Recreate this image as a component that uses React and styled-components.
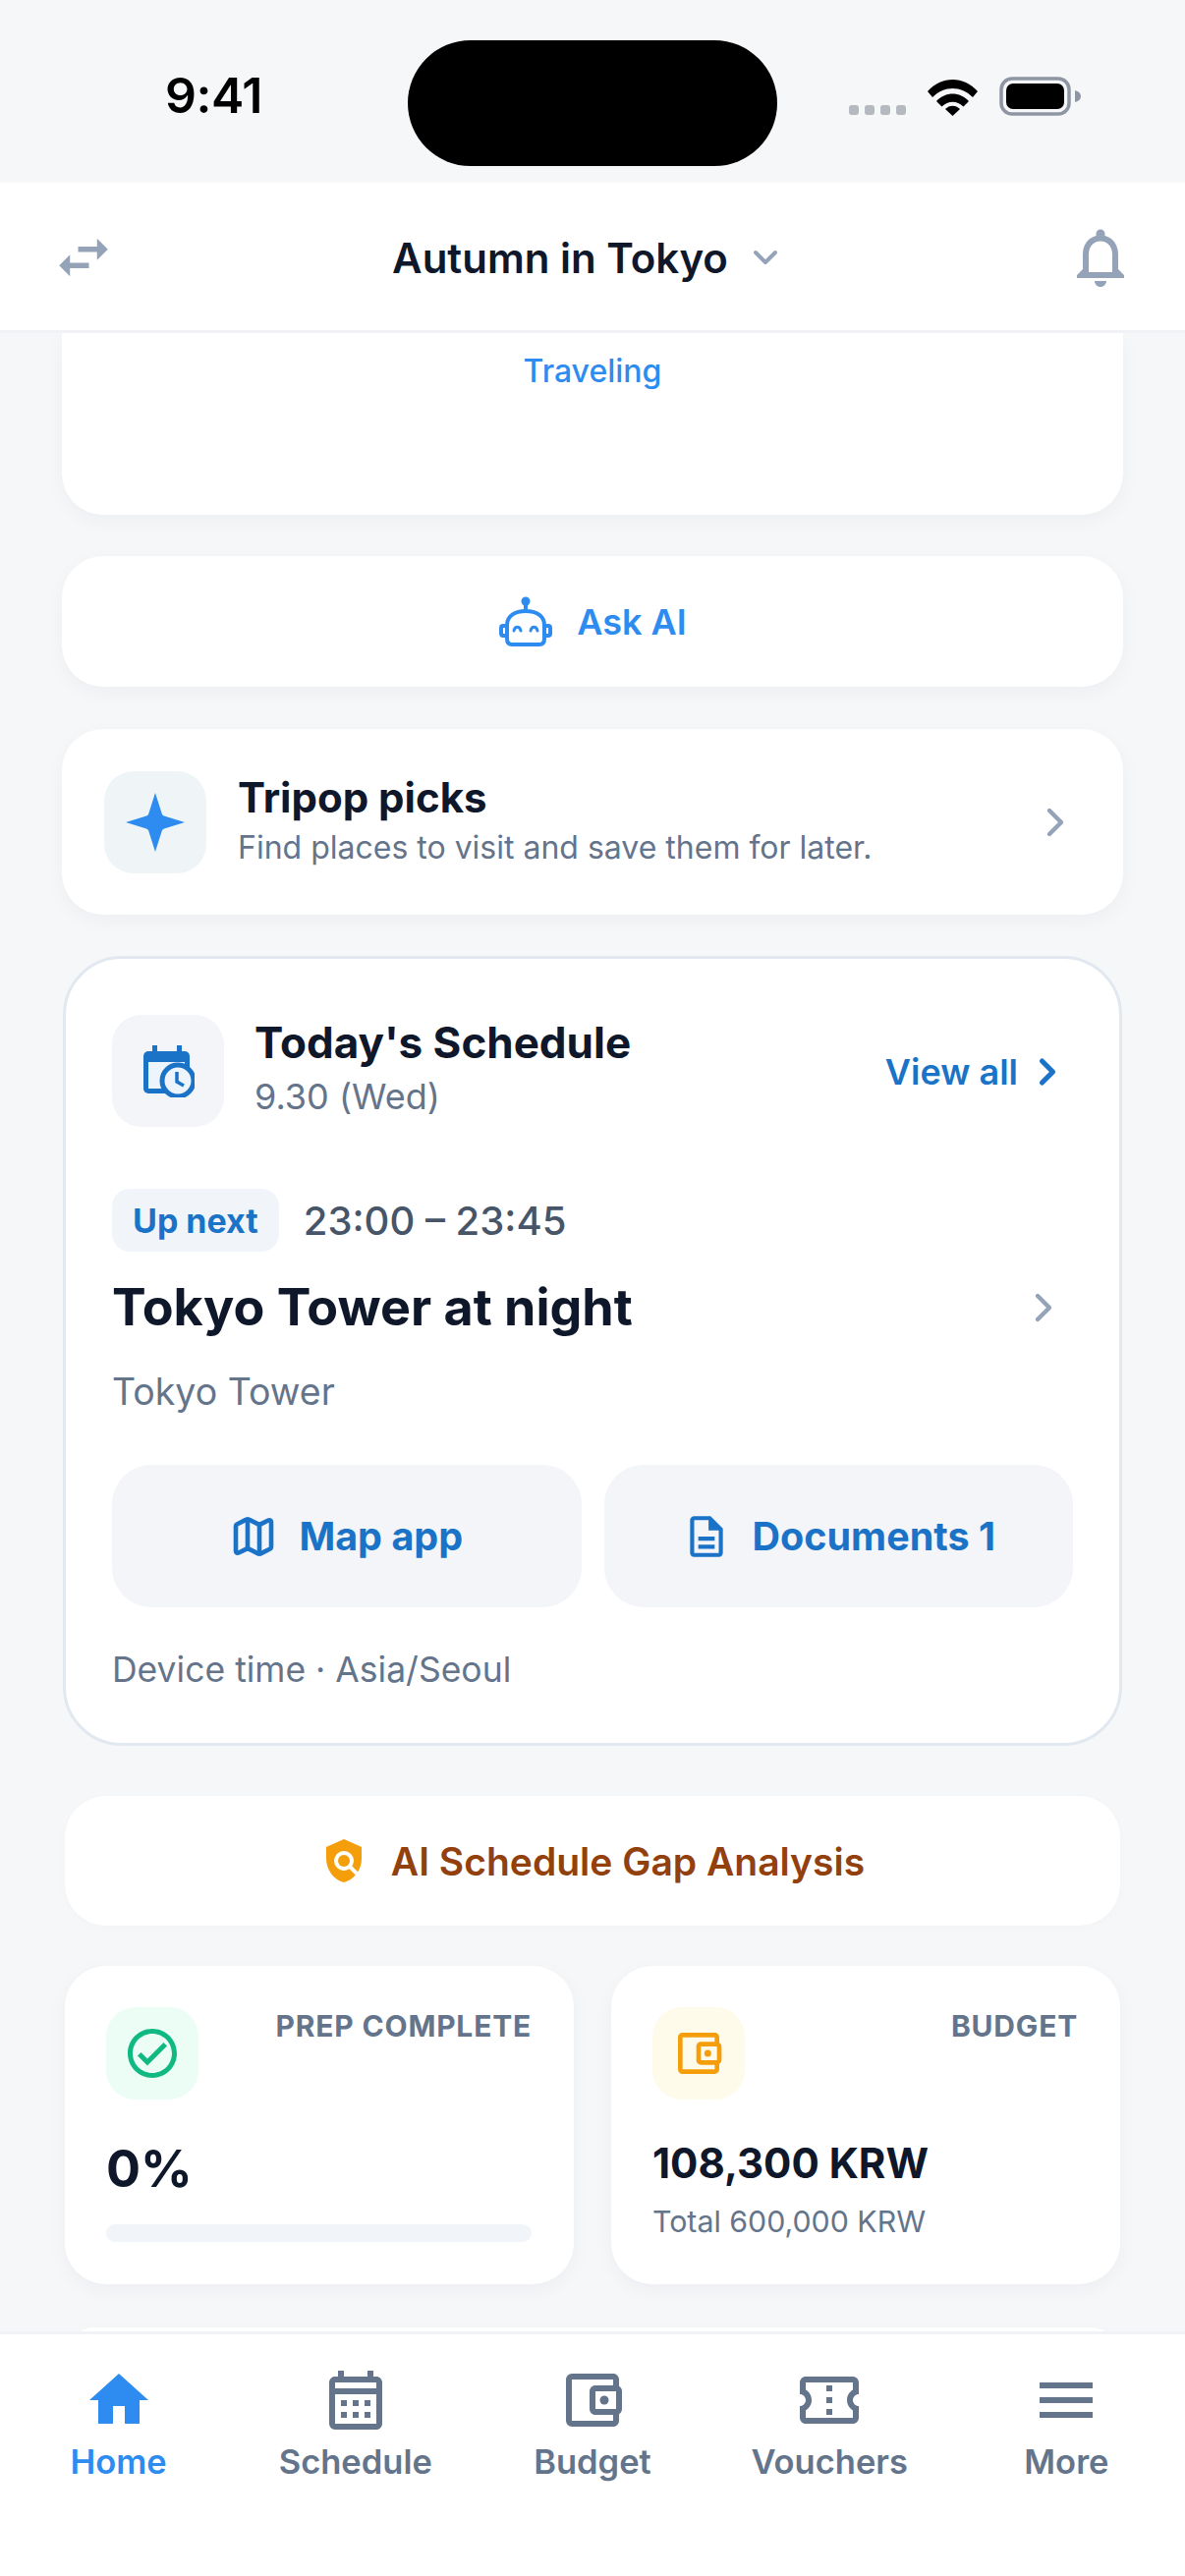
import React from 'react'
import styled, { createGlobalStyle } from 'styled-components'
import { ChevronDown, ChevronRight, Map as MapIcon } from 'lucide-react'
import {
  MdSwapHoriz,
  MdOutlineNotifications,
  MdOutlineDescription,
  MdPolicy,
  MdOutlineCheckCircle,
  MdOutlineAccountBalanceWallet,
  MdHome,
  MdOutlineCalendarMonth,
  MdOutlineConfirmationNumber,
  MdMenu,
} from 'react-icons/md'

const blue = '#2e8cf0'
const deepBlue = '#1a73c7'
const ink = '#0f172a'
const slate = '#64748b'
const muted = '#94a3b8'

const GlobalStyle = createGlobalStyle`
  * { box-sizing: border-box; }
  html, body { margin: 0; padding: 0; background: #f6f7f9; }
  body { font-family: Inter, "Noto Sans", sans-serif; }
`

const Phone = styled.div`
  width: 1206px;
  height: 2622px;
  display: flex;
  flex-direction: column;
  overflow: hidden;
  background: #f6f7f9;
`

const StatusBar = styled.div`
  height: 186px;
  flex: none;
  position: relative;
  display: flex;
  align-items: flex-start;
  padding: 68px 106px 0 168px;
  justify-content: space-between;
`

const Clock = styled.div`
  font-size: 50px;
  line-height: 58px;
  font-weight: 600;
  letter-spacing: -0.5px;
  color: #000;
`

const Island = styled.div`
  position: absolute;
  left: 415px;
  top: 41px;
  width: 376px;
  height: 128px;
  border-radius: 64px;
  background: #000;
`

const StatusIcons = styled.div`
  display: flex;
  align-items: flex-end;
  padding-top: 10px;
  gap: 22px;
`

const Dots = styled.div`
  display: flex;
  gap: 6px;
  padding-bottom: 1px;
`

const Dot = styled.span`
  width: 10px;
  height: 10px;
  border-radius: 3px;
  background: #b5b9c0;
`

const Header = styled.header`
  height: 153px;
  flex: none;
  background: #fff;
  border-bottom: 3px solid #f0f2f5;
  display: flex;
  align-items: center;
  justify-content: space-between;
  padding: 2px 50px 0 52px;
  color: ${muted};
`

const TripTitle = styled.div`
  display: flex;
  align-items: center;
  gap: 18px;
  font-size: 42px;
  font-weight: 600;
  color: ${ink};
  margin-right: 4px;

  svg { color: ${muted}; }
`

const Scroll = styled.main`
  flex: 1;
  min-height: 0;
  overflow: hidden;
  display: flex;
  flex-direction: column;
  gap: 42px;
  padding: 0 63px;
`

const Card = styled.section`
  flex: none;
  background: #fff;
  border-radius: 42px;
  box-shadow: 0 6px 20px rgba(15, 23, 42, 0.04);
`

const HeroStub = styled(Card)`
  height: 185px;
  border-radius: 0 0 42px 42px;
  padding-top: 17px;
  text-align: center;
  font-size: 32px;
  line-height: 44px;
  font-weight: 500;
  color: ${blue};
`

const AskButton = styled(Card)`
  height: 133px;
  display: flex;
  align-items: center;
  justify-content: center;
  gap: 24px;
  font-size: 36px;
  font-weight: 600;
  color: ${blue};
`

const PicksCard = styled(Card)`
  height: 189px;
  margin-top: 1px;
  display: flex;
  align-items: center;
  padding: 0 45px 0 43px;
  gap: 32px;
  color: ${muted};
`

const Tile = styled.div`
  flex: none;
  width: ${p => p.$size}px;
  height: ${p => p.$size}px;
  border-radius: 30px;
  display: flex;
  align-items: center;
  justify-content: center;
  background: ${p => p.$bg};
`

const PicksText = styled.div`
  flex: 1;
`

const PicksTitle = styled.div`
  font-size: 42px;
  line-height: 50px;
  font-weight: 700;
  color: ${ink};
  margin-top: -4px;
`

const PicksSub = styled.div`
  font-size: 32px;
  line-height: 40px;
  margin-top: 6px;
  color: ${slate};
`

const ScheduleCard = styled.section`
  flex: none;
  height: 804px;
  margin: 0 1px;
  background: #fff;
  border: 3px solid #e2e8f0;
  border-radius: 60px;
  padding: 57px 47px 0;
`

const ScheduleHead = styled.div`
  display: flex;
  align-items: center;
  gap: 31px;
  height: 114px;
`

const HeadText = styled.div`
  flex: 1;
`

const HeadTitle = styled.div`
  font-size: 44px;
  line-height: 56px;
  font-weight: 700;
  color: ${ink};
  margin-top: -8px;
`

const HeadDate = styled.div`
  font-size: 36px;
  line-height: 46px;
  margin-top: 4px;
  color: ${slate};
`

const ViewAll = styled.div`
  display: flex;
  align-items: center;
  gap: 8px;
  font-size: 36px;
  font-weight: 600;
  color: ${deepBlue};
  margin: 2px 4px 0 0;
`

const NextRow = styled.div`
  display: flex;
  align-items: center;
  gap: 25px;
  margin-top: 63px;
`

const Pill = styled.div`
  height: 64px;
  padding: 0 21px;
  display: flex;
  align-items: center;
  border-radius: 18px;
  background: #f1f5f9;
  font-size: 34px;
  font-weight: 700;
  color: ${deepBlue};
`

const TimeRange = styled.div`
  font-size: 40px;
  font-weight: 500;
  color: #475569;
`

const EventRow = styled.div`
  display: flex;
  align-items: center;
  justify-content: space-between;
  margin-top: 23px;
  padding-right: 6px;
  color: ${muted};
`

const EventTitle = styled.div`
  font-size: 52px;
  line-height: 68px;
  font-weight: 700;
  color: ${ink};
`

const Place = styled.div`
  margin-top: 30px;
  font-size: 37.5px;
  line-height: 44px;
  color: ${slate};
`

const ActionRow = styled.div`
  display: grid;
  grid-template-columns: 1fr 1fr;
  gap: 23px;
  margin-top: 52px;
`

const ActionButton = styled.div`
  height: 145px;
  border-radius: 40px;
  background: #f3f5f8;
  display: flex;
  align-items: center;
  justify-content: center;
  gap: 22px;
  font-size: 39.5px;
  font-weight: 700;
  color: ${deepBlue};
`

const Note = styled.div`
  margin-top: 42px;
  font-size: 35.5px;
  line-height: 44px;
  color: ${slate};
`

const GapCard = styled(Card)`
  height: 132px;
  margin: 9px 3px 0;
  display: flex;
  align-items: center;
  justify-content: center;
  gap: 24px;
  font-size: 39px;
  font-weight: 600;
  color: #92400e;
  box-shadow: 0 2px 10px rgba(15, 23, 42, 0.02);

  svg { color: #f59e0b; }
`

const StatGrid = styled.div`
  flex: none;
  display: grid;
  grid-template-columns: 518px 518px;
  justify-content: space-between;
  margin: -1px 3px 0;
`

const StatCard = styled(Card)`
  height: 324px;
  padding: 42px 43px 0 42px;
`

const StatTop = styled.div`
  display: flex;
  justify-content: space-between;
  align-items: flex-start;
`

const StatLabel = styled.div`
  font-size: 30px;
  line-height: 38px;
  font-weight: 700;
  letter-spacing: 0.8px;
  color: ${slate};
`

const Percent = styled.div`
  margin-top: 40px;
  font-size: 52px;
  line-height: 62px;
  font-weight: 700;
  color: ${ink};
`

const Track = styled.div`
  margin-top: 25px;
  height: 18px;
  border-radius: 9px;
  background: #f1f5f9;
`

const Amount = styled.div`
  margin-top: 38px;
  font-size: 42px;
  line-height: 54px;
  font-weight: 700;
  color: ${ink};
`

const AmountNote = styled.div`
  margin-top: 12px;
  font-size: 30.3px;
  line-height: 40px;
  color: ${slate};
`

const PeekCard = styled(Card)`
  height: 60px;
  margin: 2px 3px 0;
`

const TabBar = styled.nav`
  height: 249px;
  flex: none;
  background: #fff;
  border-top: 3px solid #f0f2f5;
  display: grid;
  grid-template-columns: repeat(5, 1fr);
  padding-top: 31px;
`

const Tab = styled.div`
  display: flex;
  flex-direction: column;
  align-items: center;
  gap: 5px;
  font-size: 34.5px;
  line-height: 44px;
  font-weight: 600;
  color: ${p => (p.$active ? blue : slate)};
`

function WifiGlyph() {
  return (
    <svg width="51" height="38" viewBox="0 0 51 38">
      <path d="M0 13 C14 -3 37 -3 51 13 L46 19 C34 7 17 7 5 19Z" fill="#000" />
      <path d="M9 23 C18 13 33 13 42 23 L36.5 28.5 C30 22 21 22 14.5 28.5Z" fill="#000" />
      <path d="M18 31 C22 26.5 29 26.5 33 31 L25.5 38Z" fill="#000" />
    </svg>
  )
}

function BatteryGlyph() {
  return (
    <svg width="83" height="40" viewBox="0 0 83 40">
      <rect x="2" y="2" width="69" height="36" rx="11" fill="none" stroke="#8e96a4" strokeWidth="3.5" />
      <rect x="7" y="7" width="59" height="26" rx="7" fill="#000" />
      <path d="M77 14 C81 15 83 17 83 20 C83 23 81 25 77 26Z" fill="#8e96a4" />
    </svg>
  )
}

function RobotGlyph() {
  return (
    <svg width="56" height="52" viewBox="0 0 56 52" fill="none" stroke={blue} strokeWidth="4" strokeLinecap="round" strokeLinejoin="round">
      <circle cx="28" cy="5" r="4.5" fill={blue} stroke="none" />
      <path d="M28 9 V15" />
      <path d="M9 29 C9 20 17 15 28 15 C39 15 47 20 47 29 V43 C47 47 45 49 42 49 H14 C11 49 9 47 9 43Z" />
      <path d="M9 30 H5 C3.5 30 3 31 3 32 V38 C3 39 3.5 40 5 40 H9" />
      <path d="M47 30 H51 C52.5 30 53 31 53 32 V38 C53 39 52.5 40 51 40 H47" />
      <path d="M16 35 C17 30 22 30 23 35" strokeWidth="3" />
      <path d="M33 35 C34 30 39 30 40 35" strokeWidth="3" />
    </svg>
  )
}

function SparkGlyph() {
  return (
    <svg width="60" height="60" viewBox="0 0 60 60">
      <path d="M30 0 L37 22 Q38 23 39 23.5 L60 30 L39 36.5 Q38 37 37 38 L30 60 L23 38 Q22 37 21 36.5 L0 30 L21 23.5 Q22 23 23 22Z" fill={blue} />
    </svg>
  )
}

function CalendarClockGlyph() {
  return (
    <svg width="54" height="54" viewBox="0 0 54 54">
      <rect x="2" y="7" width="47" height="43" rx="5" fill={deepBlue} />
      <rect x="7" y="18" width="37" height="27" fill="#edf4fc" />
      <rect x="11" y="1" width="5" height="10" fill={deepBlue} />
      <rect x="36" y="1" width="5" height="10" fill={deepBlue} />
      <circle cx="37" cy="37" r="16" fill="#edf4fc" stroke={deepBlue} strokeWidth="5" />
      <path d="M36 28 V38 L43 42" fill="none" stroke={deepBlue} strokeWidth="3.5" />
    </svg>
  )
}

const tabs = [
  { label: 'Home', Icon: MdHome, active: true },
  { label: 'Schedule', Icon: MdOutlineCalendarMonth },
  { label: 'Budget', Icon: MdOutlineAccountBalanceWallet },
  { label: 'Vouchers', Icon: MdOutlineConfirmationNumber },
  { label: 'More', Icon: MdMenu },
]

export default function App() {
  return (
    <Phone>
      <GlobalStyle />
      <StatusBar>
        <Clock>9:41</Clock>
        <Island />
        <StatusIcons>
          <Dots>
            <Dot />
            <Dot />
            <Dot />
            <Dot />
          </Dots>
          <WifiGlyph />
          <BatteryGlyph />
        </StatusIcons>
      </StatusBar>

      <Header>
        <MdSwapHoriz size={66} />
        <TripTitle>
          Autumn in Tokyo
          <ChevronDown size={40} strokeWidth={2.4} />
        </TripTitle>
        <MdOutlineNotifications size={72} />
      </Header>

      <Scroll>
        <HeroStub>Traveling</HeroStub>

        <AskButton>
          <RobotGlyph />
          Ask AI
        </AskButton>

        <PicksCard>
          <Tile $size={104} $bg="#eff5f6">
            <SparkGlyph />
          </Tile>
          <PicksText>
            <PicksTitle>Tripop picks</PicksTitle>
            <PicksSub>Find places to visit and save them for later.</PicksSub>
          </PicksText>
          <ChevronRight size={48} strokeWidth={2.2} />
        </PicksCard>

        <ScheduleCard>
          <ScheduleHead>
            <Tile $size={114} $bg="#f3f5f9">
              <CalendarClockGlyph />
            </Tile>
            <HeadText>
              <HeadTitle>Today's Schedule</HeadTitle>
              <HeadDate>9.30 (Wed)</HeadDate>
            </HeadText>
            <ViewAll>
              View all
              <ChevronRight size={44} strokeWidth={2.8} />
            </ViewAll>
          </ScheduleHead>

          <NextRow>
            <Pill>Up next</Pill>
            <TimeRange>23:00 – 23:45</TimeRange>
          </NextRow>
          <EventRow>
            <EventTitle>Tokyo Tower at night</EventTitle>
            <ChevronRight size={48} strokeWidth={2.2} />
          </EventRow>
          <Place>Tokyo Tower</Place>

          <ActionRow>
            <ActionButton>
              <MapIcon size={48} strokeWidth={2.3} />
              Map app
            </ActionButton>
            <ActionButton>
              <MdOutlineDescription size={50} />
              Documents 1
            </ActionButton>
          </ActionRow>

          <Note>Device time · Asia/Seoul</Note>
        </ScheduleCard>

        <GapCard>
          <MdPolicy size={48} />
          AI Schedule Gap Analysis
        </GapCard>

        <StatGrid>
          <StatCard>
            <StatTop>
              <Tile $size={94} $bg="#ecfdf5">
                <MdOutlineCheckCircle size={60} color="#10b981" />
              </Tile>
              <StatLabel>PREP COMPLETE</StatLabel>
            </StatTop>
            <Percent>0%</Percent>
            <Track />
          </StatCard>
          <StatCard>
            <StatTop>
              <Tile $size={94} $bg="#fffbeb">
                <MdOutlineAccountBalanceWallet size={56} color="#f59e0b" />
              </Tile>
              <StatLabel>BUDGET</StatLabel>
            </StatTop>
            <Amount>108,300 KRW</Amount>
            <AmountNote>Total 600,000 KRW</AmountNote>
          </StatCard>
        </StatGrid>

        <PeekCard />
      </Scroll>

      <TabBar>
        {tabs.map(({ label, Icon, active }) => (
          <Tab key={label} $active={active}>
            <Icon size={72} />
            {label}
          </Tab>
        ))}
      </TabBar>
    </Phone>
  )
}
